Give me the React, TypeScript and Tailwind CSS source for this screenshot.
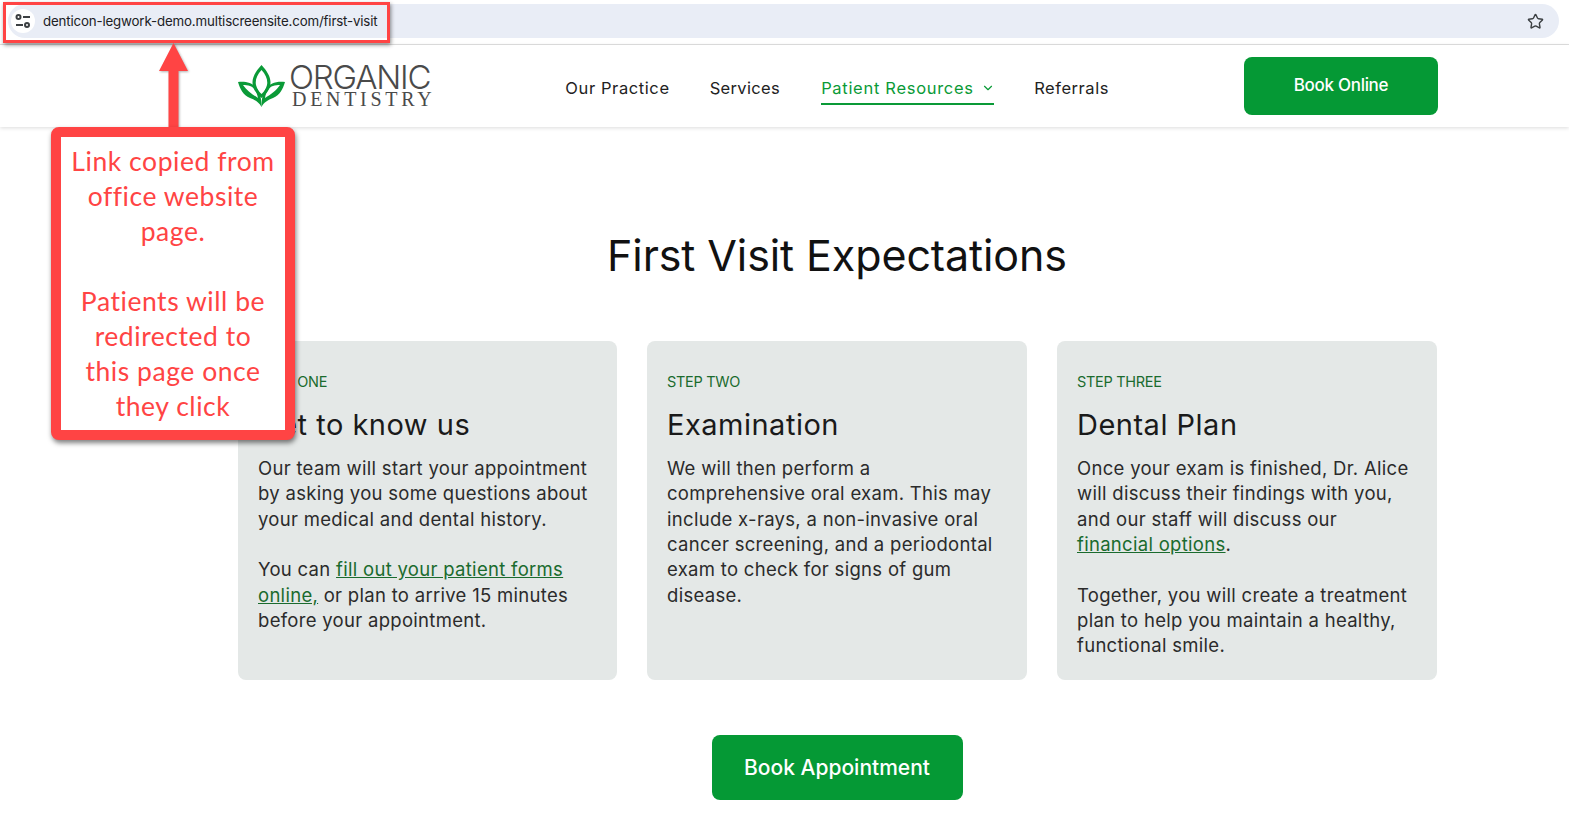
import React from "react";
import { ChevronDown, Star } from "lucide-react";

const sans = "font-['Inter','Noto_Sans',sans-serif]";

function SiteOptionsIcon() {
  return (
    <svg width="16" height="14" viewBox="0 0 16 14" fill="none" stroke="#3c4043" strokeWidth="2">
      <circle cx="3.5" cy="3" r="2" />
      <path d="M8 3h7" />
      <path d="M1 11h7" />
      <circle cx="12" cy="11" r="2" />
    </svg>
  );
}

function Leaf() {
  return (
    <svg width="48" height="42" viewBox="0 0 48 42" fill="#0a9a37" fillRule="evenodd">
      <path d="M23.5 0C17 7 13 14 15 21C16 26 20 30 23.5 33C27 30 31 26 32 21C34 14 30 7 23.5 0ZM23.5 5C19 10 17 15 18 20C19 24 21 27 23.5 29C26 27 28 24 29 20C30 15 28 10 23.5 5Z" />
      <path d="M0 17C8 16 16 18 20 25C23 30 23.5 37 23.5 42C21 37 17 35 12 33C5 30 2 24 0 17ZM5 20C9 26 14 29 20 33C19 27 16 22 12 21C10 20 7 20 5 20Z" />
      <path d="M47 17C39 16 31 18 27 25C24 30 23.5 37 23.5 42C26 37 30 35 35 33C42 30 45 24 47 17ZM42 20C38 26 33 29 27 33C28 27 31 22 35 21C37 20 40 20 42 20Z" />
    </svg>
  );
}

function StepCard({ step, title, width, children }: { step: string; title: string; width: string; children: React.ReactNode }) {
  return (
    <div className={`h-[339px] rounded-lg bg-[#e4e8e7] pl-[20px] pt-[31px] ${width}`}>
      <div className="text-[14.5px] leading-[20px] tracking-[-0.3px] text-[#1a6b2e]">{step}</div>
      <h2 className="mt-[11px] text-[29px] leading-[44px] tracking-[0.5px] text-[#1a1a1a]">{title}</h2>
      <div className="mt-[9px] whitespace-nowrap text-[18.5px] leading-[25.33px] tracking-[0.3px] text-[#2b2b2b]">{children}</div>
    </div>
  );
}

function CardLink({ children }: { children: React.ReactNode }) {
  return <a className="text-[#1a6b2e] underline">{children}</a>;
}

export default function App() {
  return (
    <div className={`relative h-[822px] overflow-hidden bg-white ${sans}`}>
      {/* browser bar */}
      <div className="h-[45px] border-b border-[#e0e0e0] pt-[4px] pl-[8px] pr-[10px]">
        <div className="flex h-[34px] items-center rounded-full bg-[#e9edf6] pl-[3px] pr-[15px]">
          <div className="flex h-[24px] w-[24px] items-center justify-center rounded-full bg-white">
            <SiteOptionsIcon />
          </div>
          <span className="ml-[8px] pt-[1px] text-[13.3px] tracking-[-0.16px] text-[#202124]">
            denticon-legwork-demo.multiscreensite.com/first-visit
          </span>
          <Star className="ml-auto" size={17} strokeWidth={2} color="#3c4043" />
        </div>
      </div>

      {/* site header */}
      <header className="relative flex h-[82px] items-start pl-[238px] shadow-[0_1px_4px_rgba(0,0,0,0.14)]">
        <div className="mt-[20px] flex items-start">
          <Leaf />
          <div className="ml-[3px] -mt-[4px] flex flex-col text-[#4a4a4a]">
            <span className="text-[33px] leading-[32px] font-light tracking-[-1.2px]">ORGANIC</span>
            <span className="ml-[3px] -mt-[3px] text-[20px] leading-[18px] tracking-[3.7px] font-['Liberation_Serif',serif]">DENTISTRY</span>
          </div>
        </div>
        <nav className="ml-[130px] mt-[33px] flex items-start text-[16.5px] leading-[20px] text-[#222]">
          <span className="tracking-[0.6px]">Our Practice</span>
          <span className="ml-[40px] tracking-[0.35px]">Services</span>
          <span className="ml-[41px] flex h-[27px] w-[173px] items-start border-b-2 border-[#0a9a37] tracking-[0.7px] text-[#0a9a37]">
            Patient Resources
            <ChevronDown className="ml-auto mr-[-1px] mt-[3px]" size={14} />
          </span>
          <span className="ml-[40px] tracking-[0.55px]">Referrals</span>
        </nav>
        <a className="ml-auto mr-[131px] mt-[12px] flex h-[58px] w-[194px] items-center justify-center rounded-lg bg-[#059935] text-[17px] font-medium tracking-[-0.3px] text-white">
          Book Online
        </a>
      </header>

      <main className="flex flex-col items-center">
        <h1 className="mt-[97px] ml-[105px] text-[43px] leading-[62px] tracking-[-0.1px] text-[#111]">First Visit Expectations</h1>
        <div className="mt-[55px] ml-[106px] flex gap-[30px]">
          <StepCard step="STEP ONE" title="Get to know us" width="w-[379px]">
            <p>
              Our team will start your appointment
              <br />
              by asking you some questions about
              <br />
              your medical and dental history.
            </p>
            <p className="mt-[25.33px]">
              You can <CardLink>fill out your patient forms</CardLink>
              <br />
              <CardLink>online,</CardLink> or plan to arrive 15 minutes
              <br />
              before your appointment.
            </p>
          </StepCard>
          <StepCard step="STEP TWO" title="Examination" width="w-[380px]">
            <p>
              We will then perform a
              <br />
              comprehensive oral exam. This may
              <br />
              include x-rays, a non-invasive oral
              <br />
              cancer screening, and a periodontal
              <br />
              exam to check for signs of gum
              <br />
              disease.
            </p>
          </StepCard>
          <StepCard step="STEP THREE" title="Dental Plan" width="w-[380px]">
            <p>
              Once your exam is finished, Dr. Alice
              <br />
              will discuss their findings with you,
              <br />
              and our staff will discuss our
              <br />
              <CardLink>financial options</CardLink>.
            </p>
            <p className="mt-[25.33px]">
              Together, you will create a treatment
              <br />
              plan to help you maintain a healthy,
              <br />
              functional smile.
            </p>
          </StepCard>
        </div>
        <a className="mt-[55px] ml-[105px] flex h-[65px] w-[251px] items-center justify-center rounded-lg bg-[#059935] text-[21px] font-medium text-white">
          Book Appointment
        </a>
      </main>

      {/* annotation over the screenshot */}
      <div className="absolute left-[3px] top-[2px] h-[41px] w-[387px] border-[3px] border-[#ff4444] shadow-[1px_2px_4px_rgba(0,0,0,0.45)]" />
      <svg className="absolute left-[158px] top-[43px] drop-shadow-[1px_1px_1px_rgba(0,0,0,0.3)]" width="32" height="90" viewBox="0 0 32 90">
        <path d="M15.5 0L30 28H20.5V90H10.5V28H1Z" fill="#ff4444" />
      </svg>
      <div className="absolute left-[51px] top-[127px] h-[313px] w-[244px] rounded-[8px] border-[10px] border-[#ff4444] bg-white pt-[7px] text-center text-[26.5px] leading-[35px] tracking-[0.55px] whitespace-nowrap text-[#ff4444] shadow-[1px_3px_5px_rgba(0,0,0,0.5)] font-['Lato','Noto_Sans',sans-serif]">
        <p>
          Link copied from
          <br />
          office website
          <br />
          page.
        </p>
        <p className="mt-[35px]">
          Patients will be
          <br />
          redirected to
          <br />
          this page once
          <br />
          they click
        </p>
      </div>
    </div>
  );
}
